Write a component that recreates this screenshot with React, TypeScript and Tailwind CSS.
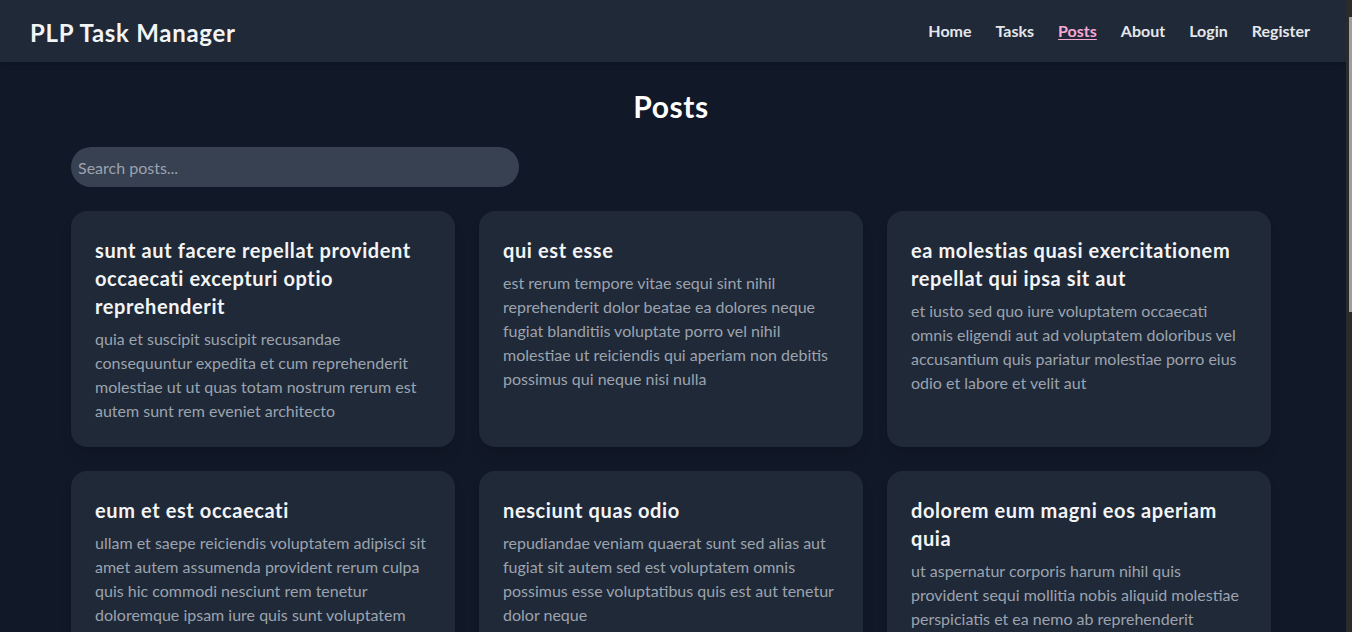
import React from "react";

const posts = [
  {
    title: "sunt aut facere repellat provident occaecati excepturi optio reprehenderit",
    body: "quia et suscipit suscipit recusandae consequuntur expedita et cum reprehenderit molestiae ut ut quas totam nostrum rerum est autem sunt rem eveniet architecto",
  },
  {
    title: "qui est esse",
    body: "est rerum tempore vitae sequi sint nihil reprehenderit dolor beatae ea dolores neque fugiat blanditiis voluptate porro vel nihil molestiae ut reiciendis qui aperiam non debitis possimus qui neque nisi nulla",
  },
  {
    title: "ea molestias quasi exercitationem repellat qui ipsa sit aut",
    body: "et iusto sed quo iure voluptatem occaecati omnis eligendi aut ad voluptatem doloribus vel accusantium quis pariatur molestiae porro eius odio et labore et velit aut",
  },
  {
    title: "eum et est occaecati",
    body: "ullam et saepe reiciendis voluptatem adipisci sit amet autem assumenda provident rerum culpa quis hic commodi nesciunt rem tenetur doloremque ipsam iure quis sunt voluptatem rerum illo velit",
  },
  {
    title: "nesciunt quas odio",
    body: "repudiandae veniam quaerat sunt sed alias aut fugiat sit autem sed est voluptatem omnis possimus esse voluptatibus quis est aut tenetur dolor neque",
  },
  {
    title: "dolorem eum magni eos aperiam quia",
    body: "ut aspernatur corporis harum nihil quis provident sequi mollitia nobis aliquid molestiae perspiciatis et ea nemo ab reprehenderit accusantium quas voluptate dolores velit et doloremque molestiae",
  },
];

const links = ["Home", "Tasks", "Posts", "About", "Login", "Register"];

export default function App() {
  return (
    <div className="flex h-screen w-full overflow-hidden bg-[#111827] font-['Lato','Noto_Sans',sans-serif]">
      <div className="flex min-w-0 flex-1 flex-col">
        <header className="flex h-[62px] shrink-0 items-center justify-between bg-[#1f2937] pl-[30px] pr-9 shadow-md">
          <div className="mt-[3px] text-2xl font-bold tracking-[0.03em] text-[#f3f4f6]">PLP Task Manager</div>
          <nav className="flex items-center gap-6">
            {links.map((l) =>
              l === "Posts" ? (
                <a key={l} className="text-base font-bold text-[#f9a8d4] underline underline-offset-2">
                  {l}
                </a>
              ) : (
                <a key={l} className="text-base font-bold text-[#e5e7eb]">
                  {l}
                </a>
              )
            )}
          </nav>
        </header>
        <main className="w-[1342px] pt-[26px]">
          <div className="mx-auto max-w-[1200px]">
            <h1 className="mb-[23px] text-center text-3xl font-bold tracking-[0.02em] text-white">Posts</h1>
            <input
              type="text"
              placeholder="Search posts..."
              className="mb-6 h-10 w-full max-w-md rounded-full bg-[#374151] pl-[7px] pr-2 text-base text-white placeholder:text-[#9ca3af] outline-none"
            />
            <div className="grid grid-cols-3 gap-6">
              {posts.map((p) => (
                <div key={p.title} className="rounded-2xl bg-[#1f2937] p-6 shadow-lg">
                  <h2 className="mb-2 pt-px text-xl font-bold tracking-[0.03em] text-[#f3f4f6]">{p.title}</h2>
                  <p className="-mt-px text-base text-[#9ca3af]">{p.body}</p>
                </div>
              ))}
            </div>
          </div>
        </main>
      </div>
      <div className="flex w-[6px] shrink-0 flex-col bg-[#2b2b2b] pt-[17px]">
        <div className="ml-[3px] h-[295px] w-[3px] bg-[#9f9f9f]" />
      </div>
    </div>
  );
}
